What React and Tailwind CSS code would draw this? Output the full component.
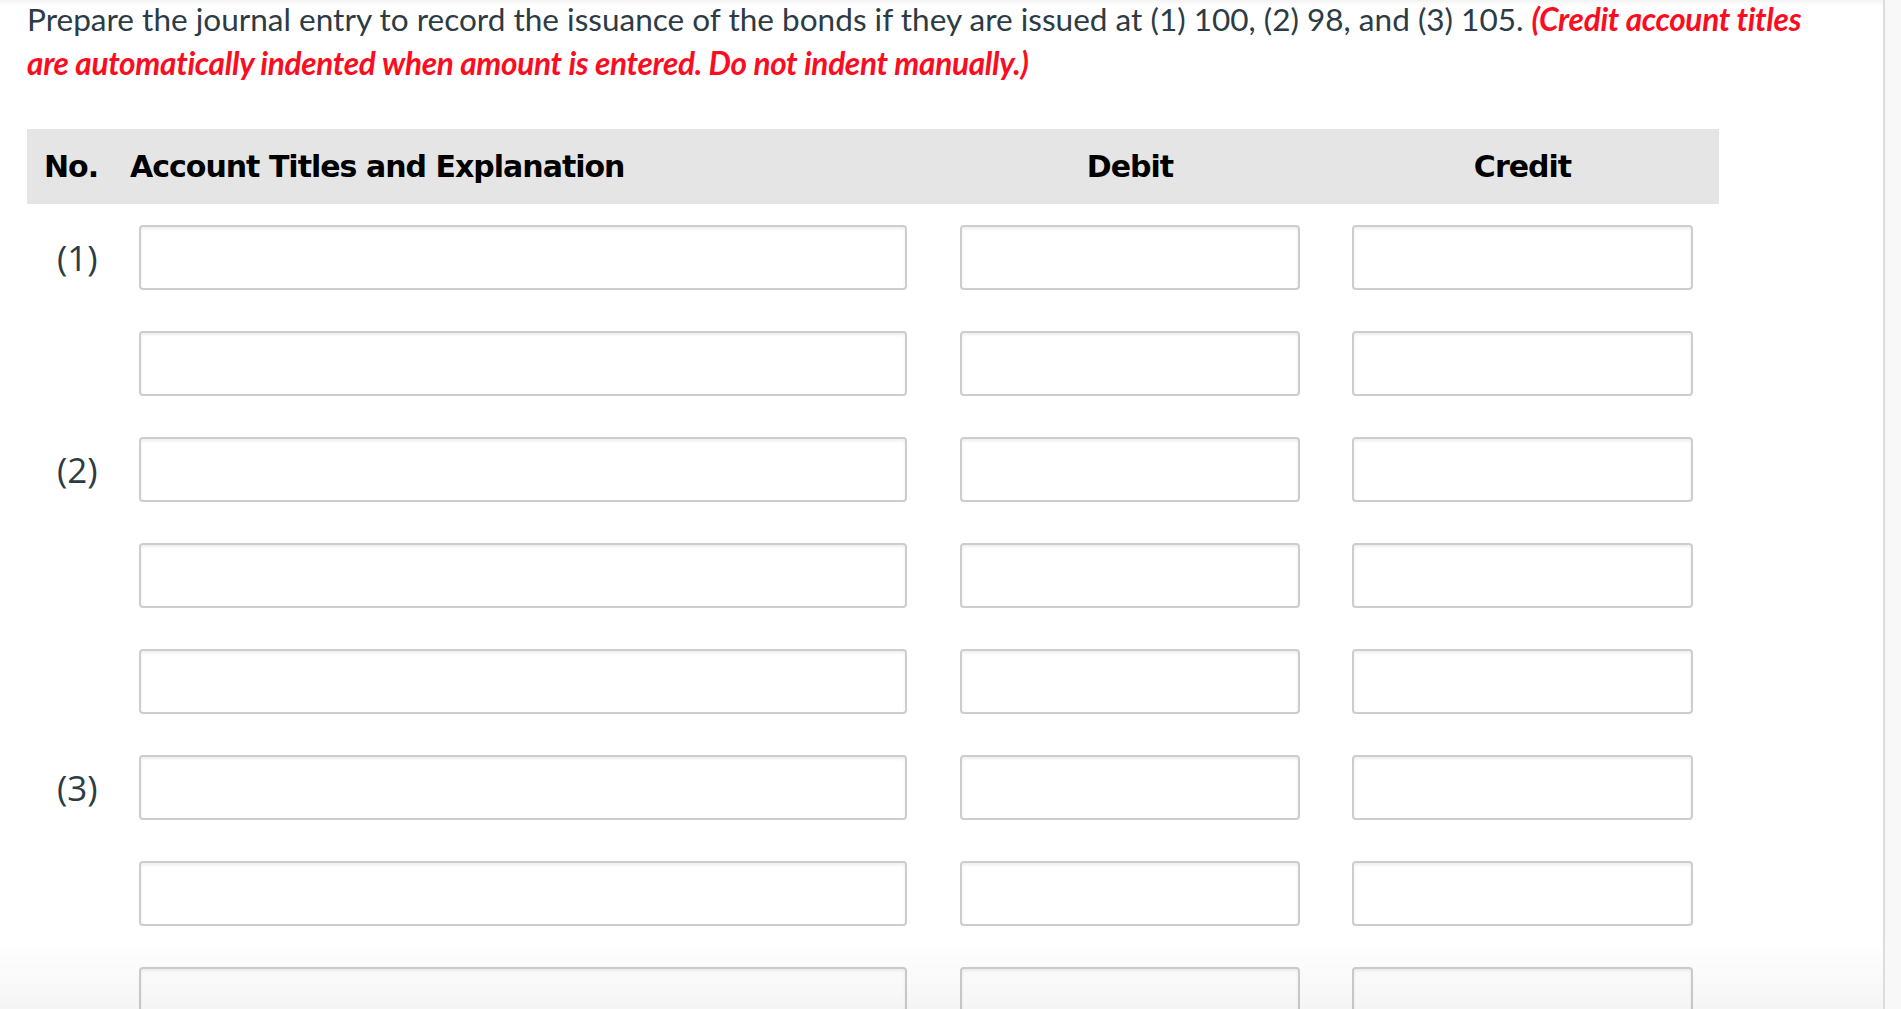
const rows = ['(1)', '', '(2)', '', '', '(3)', '', '']

const inputCls = 'h-[65px] bg-white border-2 border-[#cdcdcd] rounded-[4px] shadow-[inset_0_2px_3px_rgba(0,0,0,0.07)]'

function Row({ label }) {
  return (
    <div className="flex items-center h-[65px]">
      <div className="w-[112px] pl-[30px] text-[35px] text-[#2d3b45] leading-none" style={{ fontFamily: '"Open Sans", sans-serif' }}>
        {label}
      </div>
      <div className={`w-[768px] ${inputCls}`} />
      <div className={`w-[340px] ml-[53px] ${inputCls}`} />
      <div className={`w-[341px] ml-[52px] ${inputCls}`} />
    </div>
  )
}

export default function App() {
  return (
    <div className="h-[1009px] overflow-hidden flex bg-white relative">
      <div className="flex-1 border-r-2 border-[#dddddd] pl-[27px]">
        <p className="mt-[-3px] text-[31.55px] leading-[44px] text-[#2d3b45]" style={{ fontFamily: 'Lato, sans-serif' }}>
          Prepare the journal entry to record the issuance of the bonds if they are issued at (1) 100, (2) 98, and (3) 105.{' '}
          <span className="font-bold italic text-[#fb0d1f] tracking-[-0.3px]">
            (Credit account titles<br />are automatically indented when amount is entered. Do not indent manually.)
          </span>
        </p>

        <div className="mt-[44px] w-[1692px] h-[75px] bg-[#e5e5e5] flex items-center text-black font-bold text-[30px] tracking-[-1px]" style={{ fontFamily: '"DejaVu Sans", sans-serif' }}>
          <div className="w-[103px] pl-[17px]">No.</div>
          <div className="w-[777px]">Account Titles and Explanation</div>
          <div className="w-[340px] ml-[53px] text-center">Debit</div>
          <div className="w-[341px] ml-[52px] text-center">Credit</div>
        </div>

        <div className="mt-[21px] flex flex-col gap-[41px]">
          {rows.map((l, i) => <Row key={i} label={l} />)}
        </div>
      </div>
      <div className="w-[16px] bg-[#f8f8f8]" />

      <div className="absolute top-0 left-0 right-[18px] h-[6px] bg-gradient-to-b from-black/5 to-transparent pointer-events-none" />
      <div className="absolute bottom-0 left-0 right-[18px] h-[70px] bg-gradient-to-b from-transparent to-black/[0.04] pointer-events-none" />
    </div>
  )
}
